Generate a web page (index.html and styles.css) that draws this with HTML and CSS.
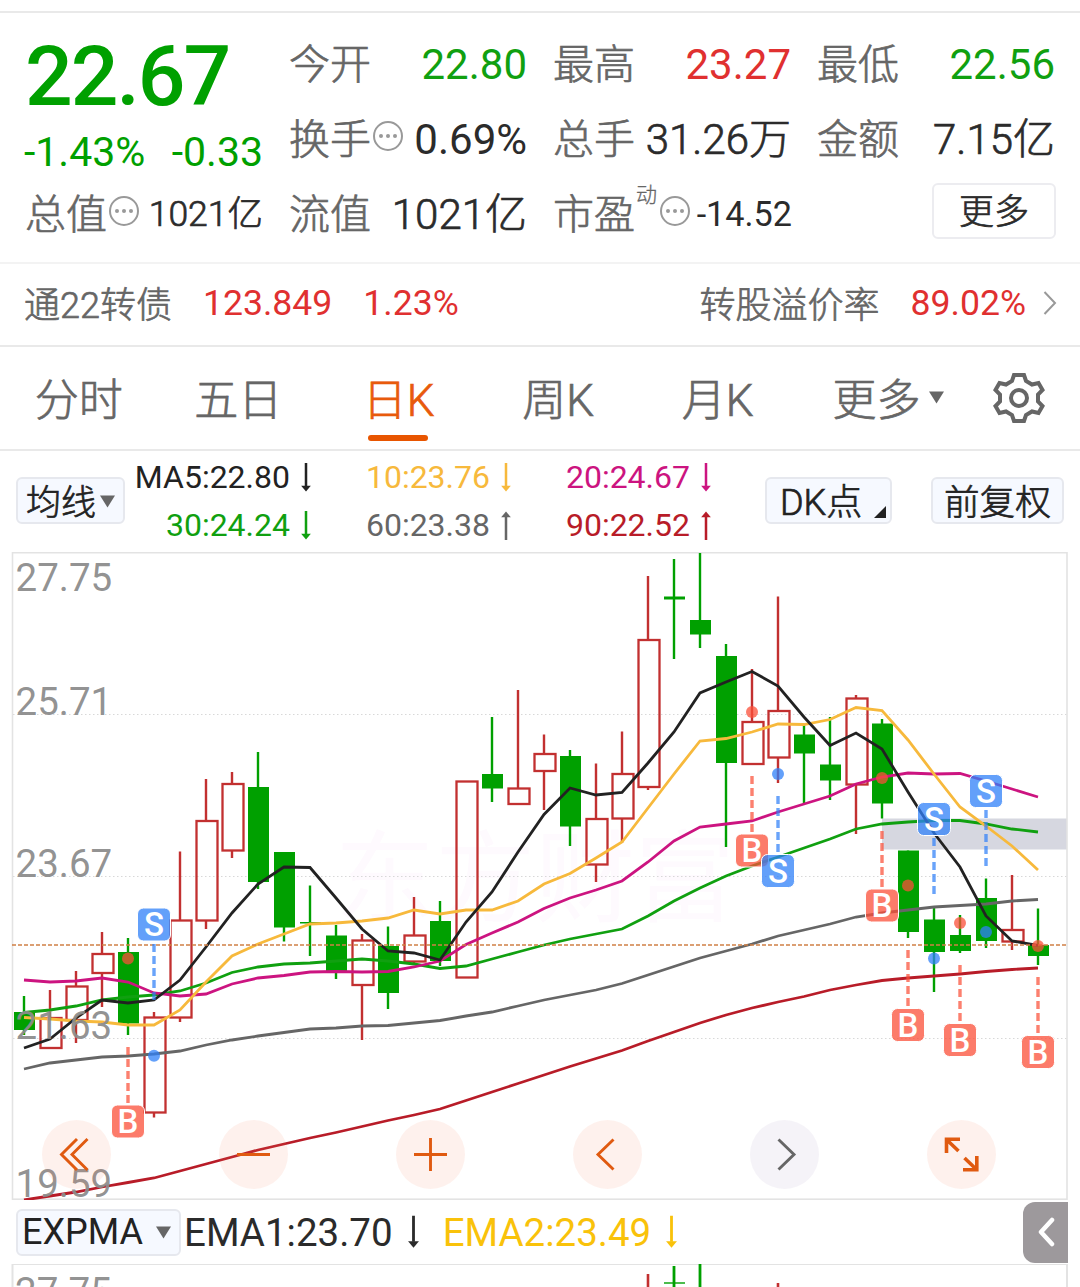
FILE: index.html
```html
<!DOCTYPE html>
<html lang="zh-CN">
<head>
    <meta charset="UTF-8">
    <title>日K 22.67</title>
    <link rel="stylesheet" href="styles.css">
</head>
<body>
    <svg class="defs" width="0" height="0">
        <symbol id="more" viewBox="0 0 32 32">
            <circle cx="16" cy="16" r="14" fill="none" stroke="#999" stroke-width="2"/>
            <circle cx="9" cy="16" r="2" fill="#999"/>
            <circle cx="16" cy="16" r="2" fill="#999"/>
            <circle cx="23" cy="16" r="2" fill="#999"/>
        </symbol>
        <symbol id="down" viewBox="0 0 12 30">
            <path d="M6 0V24" fill="none" stroke="currentColor" stroke-width="2.6"/>
            <path d="M1 23.5h10L6 29.5z" fill="currentColor"/>
        </symbol>
        <symbol id="up" viewBox="0 0 12 30">
            <path d="M6 6V30" fill="none" stroke="currentColor" stroke-width="2.6"/>
            <path d="M1 6.5h10L6 0.5z" fill="currentColor"/>
        </symbol>
        <symbol id="caret" viewBox="0 0 15 12">
            <path d="M0 0h15L7.5 12z" fill="#666"/>
        </symbol>
    </svg>

    <section class="quote">
        <div class="price-box">
            <div class="price">22.67</div>
            <div class="change"><span>-1.43%</span><span>-0.33</span></div>
        </div>
        <div class="item"><span class="name cn">今开</span><span class="green">22.80</span></div>
        <div class="item"><span class="name cn">最高</span><span class="red">23.27</span></div>
        <div class="item"><span class="name cn">最低</span><span class="green">22.56</span></div>
        <div class="item"><span class="name cn">换手</span><svg class="info"><use href="#more"/></svg><span>0.69%</span></div>
        <div class="item"><span class="name cn">总手</span><span class="cn">31.26万</span></div>
        <div class="item"><span class="name cn">金额</span><span class="cn">7.15亿</span></div>
        <div class="item"><span class="name cn">总值</span><svg class="info"><use href="#more"/></svg><span class="small cn">1021亿</span></div>
        <div class="item"><span class="name cn">流值</span><span class="cn">1021亿</span></div>
        <div class="item"><span class="name cn">市盈<sup>动</sup></span><svg class="info"><use href="#more"/></svg><span class="small pe">-14.52</span></div>
        <div class="item end"><button class="more-btn cn">更多</button></div>
    </section>

    <section class="bond">
        <span class="grey cn">通22转债</span>
        <span class="red bond-price">123.849</span>
        <span class="red bond-pct">1.23%</span>
        <span class="grey cn premium">转股溢价率</span>
        <span class="red bond-rate">89.02%</span>
        <svg class="chevron" width="14" height="26" viewBox="0 0 14 26"><path d="M1.5 2L12 13 1.5 24" fill="none" stroke="#999" stroke-width="2"/></svg>
    </section>

    <nav class="tabs cn">
        <a class="tab">分时</a>
        <a class="tab">五日</a>
        <a class="tab active">日K</a>
        <a class="tab">周K</a>
        <a class="tab">月K</a>
        <a class="tab tab-more">更多<svg width="15" height="13"><use href="#caret"/></svg></a>
        <svg class="gear" width="54" height="54" viewBox="-27 -27 54 54" fill="none" stroke="#666" stroke-width="4">
            <path d="M-5 -23H5L7 -17L13 -13.5L19.5 -15L23.5 -8L19 -3.5V3.5L23.5 8L19.5 15L13 13.5L7 17L5 23H-5L-7 17L-13 13.5L-19.5 15L-23.5 8L-19 3.5V-3.5L-23.5 -8L-19.5 -15L-13 -13.5L-7 -17Z"/>
            <circle r="8"/>
        </svg>
    </nav>

    <section class="legend">
        <button class="chip cn chip-ma">均线<svg width="15" height="13"><use href="#caret"/></svg></button>
        <div class="ma-grid">
            <div class="ma c5">MA5:22.80<svg><use href="#down"/></svg></div>
            <div class="ma c10">10:23.76<svg><use href="#down"/></svg></div>
            <div class="ma c20">20:24.67<svg><use href="#down"/></svg></div>
            <div class="ma c30">30:24.24<svg><use href="#down"/></svg></div>
            <div class="ma c60">60:23.38<svg><use href="#up"/></svg></div>
            <div class="ma c90">90:22.52<svg><use href="#up"/></svg></div>
        </div>
        <button class="chip cn chip-dk">DK点<svg width="12" height="12" viewBox="0 0 12 12"><path d="M12 0V12H0z" fill="#222"/></svg></button>
        <button class="chip cn chip-fq">前复权</button>
    </section>

    <section class="chart-box">
        <svg id="chart" width="1080" height="648" viewBox="0 552 1080 648"></svg>
        <div class="controls">
            <button><svg viewBox="0 0 69 69"><path d="M35 19L19.5 34.5 35 50M45.5 19L30 34.5 45.5 50"/></svg></button>
            <button><svg viewBox="0 0 69 69"><path d="M18 34.5H51"/></svg></button>
            <button><svg viewBox="0 0 69 69"><path d="M18 34.5H51M34.5 18V51"/></svg></button>
            <button><svg viewBox="0 0 69 69"><path d="M40.5 19.5L25 34.5 40.5 49.5"/></svg></button>
            <button class="off"><svg viewBox="0 0 69 69"><path d="M28.5 19.5L44 34.5 28.5 49.5"/></svg></button>
            <button class="expand"><svg viewBox="0 0 69 69"><path d="M19.5 33V19.2H33M20 20L31.5 31M36 49.8H49.8V36M49.5 49.5L37.5 38"/></svg></button>
        </div>
    </section>

    <section class="expma">
        <button class="chip chip-expma">EXPMA<svg width="15" height="13"><use href="#caret"/></svg></button>
        <div class="ema ema1">EMA1:23.70<svg><use href="#down"/></svg></div>
        <div class="ema ema2">EMA2:23.49<svg><use href="#down"/></svg></div>
        <button class="handle"><svg width="18" height="30" viewBox="0 0 18 30"><path d="M15 3L4 15 15 27" fill="none" stroke="#fff" stroke-width="4.5" stroke-linecap="round" stroke-linejoin="round"/></svg></button>
    </section>

    <svg id="sub" width="1080" height="23" viewBox="0 1264 1080 23"></svg>

    <script src="chart.js"></script>
</body>
</html>
```
FILE: styles.css
```css
* {
    box-sizing: border-box;
}

body {
    margin: 0;
    width: 1080px;
    height: 1287px;
    overflow: hidden;
    background: #fff;
    color: #2b2b2b;
    font-family: Roboto, "Noto Sans CJK SC", sans-serif;
}

svg {
    display: block;
    flex: none;
}

button {
    font: inherit;
    color: inherit;
    padding: 0;
    margin: 0;
    border: none;
    background: none;
}

.defs {
    position: absolute;
}

.green { color: #10a010; }
.red { color: #e03030; }
.grey { color: #666; }

/* light glyphs with a bit of extra weight */
.cn {
    font-weight: 300;
    -webkit-text-stroke: 0.7px currentColor;
}

/* quote header */
.quote {
    margin-top: 11px;
    height: 253px;
    padding: 14px 25px 0;
    border-top: 2px solid #e9e9e9;
    border-bottom: 2px solid #f3f3f3;
    display: grid;
    grid-template-columns: repeat(4, 238px);
    grid-template-rows: repeat(3, 75px);
    column-gap: 26px;
    font-size: 42px;
}

.price-box {
    grid-row: span 2;
    color: #00a000;
}

.price {
    margin-top: 5px;
    font-size: 84px;
    line-height: 90px;
    font-weight: 500;
    letter-spacing: -2px;
}

.change {
    display: flex;
    justify-content: space-between;
    margin-left: -1px;
    line-height: 60px;
    font-size: 41px;
}

.item {
    display: flex;
    align-items: center;
    line-height: 70px;
    white-space: nowrap;
}

.item span:last-child {
    margin-left: auto;
}

.name {
    position: relative;
    padding-top: 1px;
    color: #666;
    font-size: 41px;
}

.name sup {
    position: absolute;
    left: 83px;
    top: -19px;
    font-size: 21px;
    -webkit-text-stroke-width: 0.3px;
}

.info {
    width: 32px;
    height: 32px;
    margin: -7px 0 0 1px;
}

.name:has(sup) + .info {
    margin-left: 24px;
}

.small {
    font-size: 35.5px;
}

.item .small {
    margin-top: -2px;
}

.small.pe {
    margin-right: -1px;
    font-size: 34.2px;
}

.end {
    justify-content: flex-end;
}

.more-btn {
    width: 124px;
    height: 56px;
    margin: -7px -1px 0 0;
    padding-top: 3px;
    line-height: 49px;
    border: 2px solid #ececf0;
    border-radius: 6px;
    font-size: 35px;
}

/* convertible bond */
.bond {
    display: flex;
    align-items: center;
    height: 83px;
    padding: 0 23px 3px 24px;
    border-bottom: 2px solid #e9e9e9;
    font-size: 35.6px;
}

.bond .grey {
    margin-top: -3px;
    font-size: 36px;
}

.bond-price { margin-left: 31px; }
.bond-pct { margin-left: 31px; }
.bond .premium { margin-left: auto; }
.bond-rate { margin-left: 31px; }
.chevron { margin-left: 17px; }

/* period tabs */
.tabs {
    display: flex;
    height: 104px;
    border-bottom: 2px solid #e9e9e9;
    font-size: 44px;
    color: #666;
}

.tab {
    position: relative;
    width: 159.5px;
    padding-right: 2px;
    line-height: 109px;
    height: 102px;
    text-align: center;
}

.tab.active {
    padding-right: 0;
    color: #e85a0c;
}

.tab:nth-child(4),
.tab:nth-child(5) {
    padding-right: 0;
}

.tab.active::after {
    content: "";
    position: absolute;
    left: 49px;
    bottom: 8px;
    width: 60px;
    height: 6px;
    border-radius: 3px;
    background: #e85500;
}

.tab-more {
    display: flex;
    align-items: center;
    width: auto;
    height: 109px;
    margin-left: 35px;
}

.tab-more svg {
    margin: -9px 0 0 8px;
}

.gear {
    margin: 24px 0 0 46px;
}

/* moving average legend */
.chip {
    height: 47px;
    display: flex;
    align-items: center;
    border: 2px solid #e6e8ee;
    border-radius: 6px;
    background: #f6f9ff;
    font-size: 35px;
    line-height: 43px;
    color: #222;
    white-space: nowrap;
    flex: none;
}

.legend {
    display: flex;
    height: 101px;
    padding: 0 16px;
}

.legend .chip {
    padding-top: 6px;
}

.chip-ma {
    width: 109px;
    margin-top: 26px;
    padding-left: 8px;
}

.chip-ma svg { margin: -4px 0 0 4px; }

.ma-grid {
    width: 588px;
    padding: 2px 0 0 5px;
    display: grid;
    grid-template-columns: 182px 200px 200px;
    grid-template-rows: 48px 48px;
    font-size: 32px;
}

.ma {
    display: flex;
    justify-content: flex-end;
    align-items: center;
}

.ma svg {
    width: 12px;
    height: 29px;
    margin-left: 10px;
}

.c5 { color: #222; }
.c10 { color: #f7b93c; }
.c20 { color: #cc1480; }
.c30 { color: #10a010; }
.c60 { color: #666; }
.c90 { color: #b81c28; }

.chip-dk {
    width: 127px;
    margin: 26px 0 0 52px;
    padding-left: 13px;
    font-size: 36px;
}

.chip-dk svg { margin: 16px 0 0 12px; }

.chip-fq {
    width: 133px;
    margin: 26px 0 0 auto;
    padding-left: 11px;
    font-size: 35.6px;
}

/* candles */
.chart-box {
    position: relative;
    height: 648px;
}

.controls {
    position: absolute;
    left: 42px;
    bottom: 11px;
    display: flex;
    gap: 108px;
}

.controls button {
    width: 69px;
    height: 69px;
    border-radius: 50%;
    background: rgba(250, 130, 90, 0.11);
}

.controls path {
    fill: none;
    stroke: #e05a10;
    stroke-width: 2.9;
}

.controls .expand path { stroke-width: 3.6; }
.controls .off { background: rgba(120, 80, 150, 0.07); }
.controls .off path { stroke: #666; }

/* EXPMA row */
.expma {
    display: flex;
    align-items: center;
    height: 64px;
    padding: 0 12px 0 16px;
}

.chip-expma {
    width: 165px;
    padding: 1px 0 0 4px;
    font-size: 36px;
}

.chip-expma svg { margin-left: 13px; }

.ema {
    display: flex;
    align-items: center;
    font-size: 38.5px;
}

.ema svg {
    width: 13px;
    height: 34px;
    margin-left: 14px;
}

.ema1 { margin-left: 3px; }
.ema2 { margin-left: 23px; color: #f9c20a; }

.handle {
    width: 45px;
    height: 61px;
    margin-left: auto;
    padding-left: 14px;
    border-radius: 12px 0 0 12px;
    background: #9d999c;
}

/* svg text */
.axis {
    font-size: 38.5px;
    fill: #8c8c8c;
    fill-opacity: 0.95;
}

.mark {
    font-size: 33px;
    font-weight: 500;
    fill: #fff;
    text-anchor: middle;
}

.watermark {
    font-size: 100px;
    fill: #fefafe;
}
```
FILE: chart.js
```js
const RED = '#c23030';
const GREEN = '#00a000';

// [type, high, body top, body bottom, low], one per day, 26px apart
const candles = [
    ['g', 996, 1012, 1030, 1035], ['r', 990, 1018, 1048, 1048], ['r', 971, 986.5, 1020, 1043],
    ['r', 932, 954, 973, 1007], ['g', 938, 952, 1023.5, 1035], ['r', 1012, 1017.5, 1112.5, 1117.5],
    ['r', 851.5, 920.5, 1017.5, 1022], ['r', 779, 821, 920.5, 929], ['r', 772, 784, 850.5, 858],
    ['g', 752, 787, 882, 889], ['g', 852, 852, 927.5, 941.5], ['g', 885.5, 922, 923.5, 956],
    ['g', 925, 935.5, 971, 979], ['r', 934, 940.5, 985, 1040], ['g', 926.5, 946, 993, 1009],
    ['r', 897, 935.5, 961.5, 965], ['g', 901, 921, 961, 966], ['r', 781.5, 781.5, 977.5, 977.5],
    ['g', 717, 774, 788.5, 802], ['r', 690, 788.5, 804, 804], ['r', 734.5, 754, 771, 810],
    ['g', 750, 756, 826.5, 846], ['r', 763.5, 819, 864.5, 882], ['r', 731.5, 774, 818.5, 843],
    ['r', 576, 640, 787, 790], ['g', 559, 596.5, 599.5, 659], ['g', 553, 620, 634.5, 648],
    ['g', 644, 656, 763, 847], ['r', 669, 722, 764, 764], ['r', 596.5, 711, 757.5, 783],
    ['g', 725, 734.5, 753.5, 803], ['g', 717, 764.5, 780.5, 800], ['r', 695, 698.5, 784.5, 834],
    ['g', 719, 723.5, 803.5, 818.5], ['g', 850.5, 850.5, 932, 938], ['g', 908, 919.5, 952, 992],
    ['g', 915, 935, 951, 953], ['g', 878.5, 898, 941, 948], ['r', 875, 930, 941.5, 950],
    ['g', 908.5, 945, 956, 965]
];

const lines = [
    { color: '#b81c28', y: [1200, 1196, 1192, 1187, 1182.5, 1178, 1171, 1164, 1157, 1150, 1144, 1138, 1132.5, 1126.5, 1120.5, 1115, 1109, 1100.5, 1092, 1083.5, 1075, 1066.5, 1058.5, 1050.5, 1041, 1032, 1023, 1015, 1008, 1002, 996.5, 990, 985, 980.5, 978, 976, 974, 971.5, 969.5, 968] },
    { color: '#666', y: [1069, 1063, 1060, 1057, 1056, 1054, 1051, 1045, 1040, 1036, 1032.5, 1029, 1028, 1026, 1025.5, 1023, 1020.5, 1016, 1012, 1006, 1000, 995, 990, 983.5, 975, 966.5, 958, 951, 944, 936, 930, 924, 917, 913, 910, 907, 905.5, 904, 901, 899.5] },
    { color: '#10a010', y: [1012.5, 1010, 1006, 1000, 997, 995, 991, 983, 972.5, 967, 964, 963, 961, 959, 961, 964, 968.5, 966, 959, 952, 945, 939, 934, 929, 916, 901, 888, 876, 866, 857, 848, 839, 829, 824, 822, 820.5, 820.5, 824, 829, 832] },
    { color: '#cc1480', y: [980, 982, 981, 978, 982, 993, 996, 994, 984, 978, 975.5, 972, 971.5, 972, 971.5, 967, 961, 944.5, 933, 922, 908.5, 898, 890, 881, 862, 841, 827, 824, 821, 812, 804, 796, 784, 777, 773, 774, 773.5, 781, 789, 797] },
    { color: '#f7b93c', y: [1017.5, 1019, 1021, 1022, 1025, 1025, 1010, 982, 956, 944, 934, 924, 923, 921, 918, 910, 914, 910, 910, 901, 884, 873.5, 858, 842, 808, 774, 741, 738.5, 732, 724, 724.5, 719.5, 707.5, 710.5, 740, 774, 807, 826, 846, 870] },
    { color: '#222', y: [1048, 1039, 1018, 1000, 1003, 1000, 980, 947, 913, 884, 867, 867.5, 898, 929, 951, 953, 960, 922, 892, 852, 814.5, 788, 795, 792.5, 763, 732, 693, 682, 671.5, 686, 717, 745.5, 733, 749, 792, 833, 867, 916, 941, 945.5] }
];

// buy / sell marks: day, dot y, badge y, dashed line from / to
const marks = [
    ['B', 4, 958.5, 1121.5, 1047, 1103], ['S', 5, 1055.7, 924.5, 944, 1000],
    ['B', 28, 712, 850.5, 776, 832], ['S', 29, 774, 871, 796, 852],
    ['B', 33, 778, 905.5, 831, 887], ['B', 34, 885.5, 1025, 950, 1006],
    ['S', 35, 958.5, 819, 838, 894], ['B', 36, 923, 1040, 965, 1021],
    ['S', 37, 932, 791, 810, 866], ['B', 39, 946, 1052, 977, 1033]
];

const axis = [['27.75', 591], ['25.71', 714.5], ['23.67', 876.5], ['21.63', 1038.5], ['19.59', 1196.5]];

function dayX(i) {
    return 24 + i * 26;
}

function candle(c, i) {
    const [type, high, top, bottom, low] = c;
    const x = dayX(i);
    if (type === 'g') {
        return `<path d="M${x} ${high}V${low}" stroke="${GREEN}" stroke-width="2.4"/>` +
            `<rect x="${x - 10}" y="${top}" width="21" height="${bottom - top}" fill="${GREEN}"/>`;
    }
    return `<path d="M${x} ${high}V${top}M${x} ${bottom}V${low}" stroke="${RED}" stroke-width="2.4"/>` +
        `<rect x="${x - 9.5}" y="${top}" width="21" height="${bottom - top}" fill="none" stroke="${RED}" stroke-width="2.3"/>`;
}

function drawChart() {
    let out = '<text class="watermark" x="335" y="914">东方财富</text>';
    [714.5, 876.5, 1038.5].forEach(y => {
        out += `<path d="M13 ${y}H1067" stroke="#d8d8d8" stroke-dasharray="1.5 2.5"/>`;
    });
    out += '<rect x="882" y="818.5" width="185" height="31" fill="#d6d7e0"/>';
    out += '<rect x="12.5" y="552.7" width="1054.5" height="646.5" fill="none" stroke="#e3e3e3" stroke-width="1.6"/>';
    out += candles.map(candle).join('');
    lines.forEach(l => {
        const pts = l.y.map((y, i) => `${dayX(i)},${y}`).join(' ');
        out += `<polyline points="${pts}" fill="none" stroke="${l.color}" stroke-width="2.8"/>`;
    });
    out += '<path d="M12 945H1067" stroke="#cf8045" stroke-width="1.4" stroke-dasharray="4 2"/>';

    marks.forEach(([kind, day, dot, badge, from, to]) => {
        const x = dayX(day);
        const color = kind === 'B' ? '#fb4f38' : '#2f80f8';
        out += `<circle cx="${x}" cy="${dot}" r="6" fill="${color}" fill-opacity="0.75"/>`;
        out += `<path d="M${x} ${from}V${to}" stroke="${color}" stroke-opacity="0.72" stroke-width="3.4" stroke-dasharray="8 4"/>`;
        out += `<rect x="${x - 16.5}" y="${badge - 16.5}" width="33" height="33" rx="6" fill="${color}" fill-opacity="0.75" stroke="#fff" stroke-width="1"/>`;
        out += `<text class="mark" x="${x}" y="${badge + 11.8}">${kind}</text>`;
    });
    axis.forEach(([label, y]) => {
        out += `<text class="axis" x="15.5" y="${y}">${label}</text>`;
    });
    document.getElementById('chart').innerHTML = out;
}

function drawSub() {
    document.getElementById('sub').innerHTML =
        '<rect x="12.5" y="1264" width="1054.5" height="60" fill="none" stroke="#e3e3e3" stroke-width="2"/>' +
        '<text class="axis" x="15" y="1305">27.75</text>' +
        `<path d="M648 1274V1290M778 1283V1290" stroke="${RED}" stroke-width="2.6"/>` +
        `<path d="M674 1266V1290M700 1264V1290" stroke="${GREEN}" stroke-width="2.8"/>` +
        `<path d="M664 1283H685" stroke="${GREEN}" stroke-width="1.4"/>`;
}

drawChart();
drawSub();
```
